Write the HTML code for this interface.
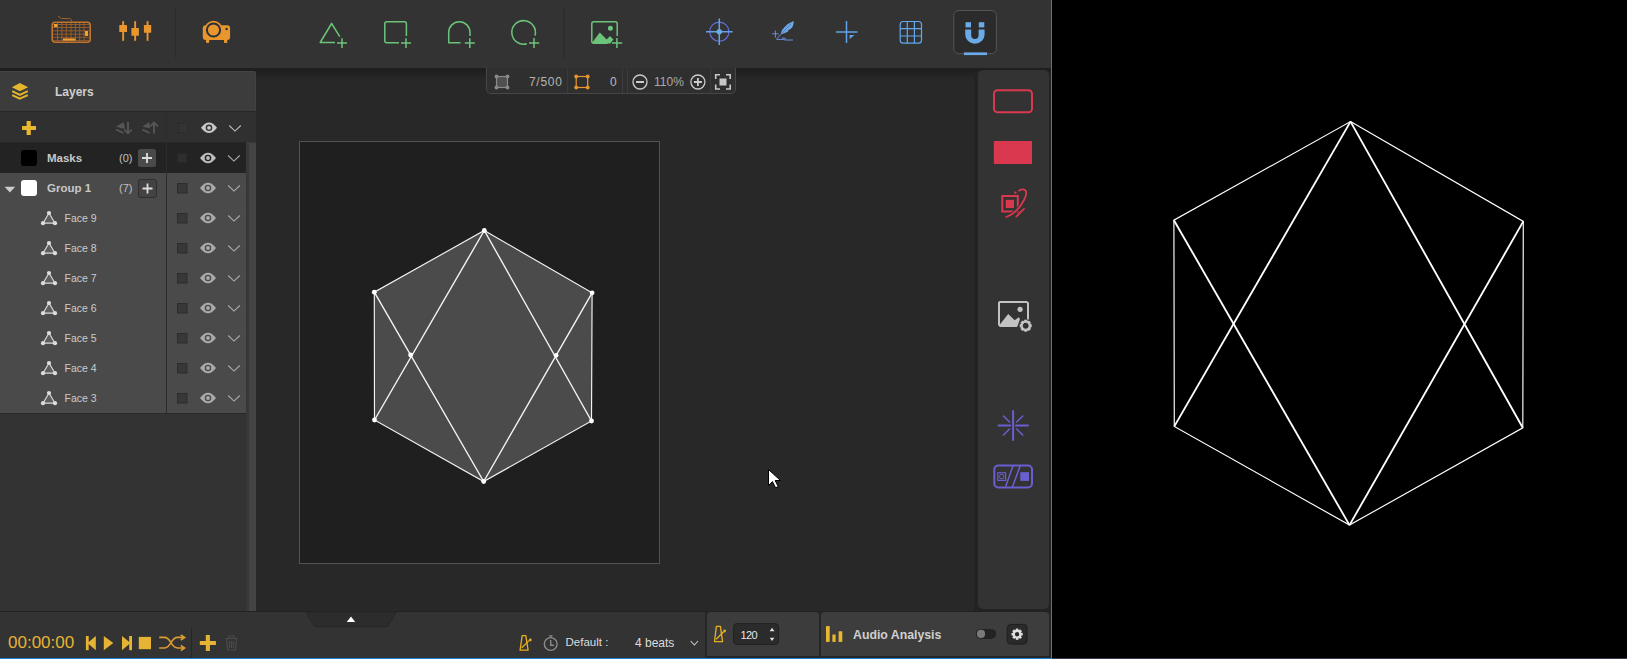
<!DOCTYPE html>
<html><head><meta charset="utf-8">
<style>
html,body{margin:0;padding:0;width:1627px;height:659px;overflow:hidden;background:#000;}
body{position:relative;font-family:"Liberation Sans",sans-serif;}
.a{position:absolute;box-sizing:border-box;}
.t{position:absolute;white-space:nowrap;line-height:1;}
svg{position:absolute;overflow:visible;}
</style></head><body>
<!-- app background -->
<div class="a" style="left:0;top:0;width:1051px;height:658px;background:#282828;"></div>
<!-- toolbar -->
<div class="a" style="left:0;top:0;width:1051px;height:68px;background:#333333;"></div>
<div class="a" style="left:0;top:68px;width:1051px;height:3px;background:#1f1f1f;"></div>
<!-- canvas area top shadow -->
<div class="a" style="left:256px;top:71px;width:718px;height:9px;background:linear-gradient(#202020,#282828);"></div>
<!-- layers panel -->
<div class="a" style="left:0;top:71px;width:256px;height:540px;background:#333333;"></div>
<div class="a" style="left:0;top:71px;width:256px;height:40px;background:#3c3c3c;border-top-right-radius:4px;border-top:1px solid #444;border-right:1px solid #424242;"></div>
<div class="a" style="left:0;top:111px;width:256px;height:1px;background:#262626;"></div>
<div class="a" style="left:0;top:112px;width:256px;height:30px;background:#303030;"></div>
<div class="a" style="left:0;top:142px;width:256px;height:1px;background:#282828;"></div>
<div class="a" style="left:0;top:143px;width:246px;height:30px;background:#232323;"></div>
<div class="a" style="left:0;top:173px;width:246px;height:240px;background:#4a4a4a;"></div>
<div class="a" style="left:0;top:413px;width:246px;height:1px;background:#2a2a2a;"></div>
<div class="a" style="left:166px;top:112px;width:1px;height:301px;background:#2c2c2c;"></div>
<!-- scrollbar -->
<div class="a" style="left:246px;top:142px;width:10px;height:469px;background:#383838;"></div>
<div class="a" style="left:249px;top:143px;width:7px;height:468px;background:#444444;"></div>
<div class="a" style="left:0;top:611px;width:1051px;height:1px;background:#222222;"></div>
<!-- layers content -->
<svg style="left:0;top:0" width="256" height="420" viewBox="0 0 256 420">
<path d="M11.8 87.2L19.8 82.9L28.2 87.2L19.8 91.2Z" fill="#e6b52e"/>
<path d="M12.2 91.2L19.8 94.8L27.8 91.2M12.2 95.2L19.8 98.6L27.8 95.2" fill="none" stroke="#e6b52e" stroke-width="2"/>
<path d="M22 128H36M28.7 121V135" stroke="#e8b830" stroke-width="4.2"/>
<g fill="#555" stroke="none"><path d="M116 126.4L123.7 122.2L125 128.6L122 128.6Z"/><path d="M142.2 126.4L149.5 122.2L149.8 128.6Z"/></g>
<g fill="none" stroke="#555" stroke-width="1.9"><path d="M116.2 129.7L123.5 133M128 122V133M124.4 129.6L128 133.2L131.7 129.6"/><path d="M142.4 129.6L149.5 133M154 122.5V133.5M150.2 126.4L154 122.6L157.9 126.4"/></g>
<rect x="178.5" y="123.5" width="9" height="9" fill="#343434" stroke="#2b2b2b" stroke-width="1"/>
<path d="M201 127.8Q209 117.2 217 127.8Q209 138.4 201 127.8Z" fill="#c8c8c8"/><circle cx="209" cy="127.8" r="3.3" fill="#303030"/><circle cx="209" cy="127.8" r="1.9" fill="#c8c8c8"/>
<path d="M229.2 125.5L235.0 131.1L240.79999999999998 125.5" fill="none" stroke="#bbbbbb" stroke-width="1.1"/>
<rect x="21" y="150" width="16" height="16" rx="3" fill="#000"/>
<rect x="138" y="149" width="18" height="18" rx="2.5" fill="#4a4a4a"/>
<path d="M142 158H152M147 153V163" stroke="#dddddd" stroke-width="1.8"/>
<rect x="177.6" y="153.4" width="9" height="9" fill="#2e2e2e"/>
<path d="M200 158Q208 147.4 216 158Q208 168.6 200 158Z" fill="#bdbdbd"/><circle cx="208" cy="158" r="3.3" fill="#232323"/><circle cx="208" cy="158" r="1.9" fill="#bdbdbd"/>
<path d="M228.1 155.5L233.9 161.1L239.7 155.5" fill="none" stroke="#aaaaaa" stroke-width="1.1"/>
<path d="M4.6 186.7H15.2L9.9 192.4Z" fill="#cccccc"/>
<rect x="21" y="180" width="16" height="16" rx="3" fill="#ffffff"/>
<rect x="138.5" y="179.5" width="18" height="18" rx="2.5" fill="#434343" stroke="#2e2e2e" stroke-width="1"/>
<path d="M142.5 188.5H152.5M147.5 183.5V193.5" stroke="#dddddd" stroke-width="1.8"/>
<rect x="177.5" y="183.5" width="9.5" height="9.5" fill="#383838" stroke="#2c2c2c" stroke-width="1"/>
<path d="M200 188Q208 177.4 216 188Q208 198.6 200 188Z" fill="#aaaaaa"/><circle cx="208" cy="188" r="3.3" fill="#4a4a4a"/><circle cx="208" cy="188" r="1.9" fill="#aaaaaa"/>
<path d="M228.2 185.5L234.0 191.1L239.79999999999998 185.5" fill="none" stroke="#aaaaaa" stroke-width="1.1"/>
<rect x="177.5" y="213.5" width="9.5" height="9.5" fill="#383838" stroke="#2c2c2c" stroke-width="1"/>
<path d="M200 218Q208 207.4 216 218Q208 228.6 200 218Z" fill="#aaaaaa"/><circle cx="208" cy="218" r="3.3" fill="#4a4a4a"/><circle cx="208" cy="218" r="1.9" fill="#aaaaaa"/>
<path d="M228.2 215.5L234.0 221.1L239.79999999999998 215.5" fill="none" stroke="#aaaaaa" stroke-width="1.1"/>
<path d="M43 223.2L49 213L55 223.2Z" fill="#5e5e5e" stroke="#d8d8d8" stroke-width="1.2" stroke-linejoin="round"/>
<g fill="#dcdcdc"><circle cx="49" cy="213" r="2.1"/><circle cx="43" cy="223.2" r="2.1"/><circle cx="55" cy="223.2" r="2.1"/></g>
<rect x="177.5" y="243.5" width="9.5" height="9.5" fill="#383838" stroke="#2c2c2c" stroke-width="1"/>
<path d="M200 248Q208 237.4 216 248Q208 258.6 200 248Z" fill="#aaaaaa"/><circle cx="208" cy="248" r="3.3" fill="#4a4a4a"/><circle cx="208" cy="248" r="1.9" fill="#aaaaaa"/>
<path d="M228.2 245.5L234.0 251.1L239.79999999999998 245.5" fill="none" stroke="#aaaaaa" stroke-width="1.1"/>
<path d="M43 253.2L49 243L55 253.2Z" fill="#5e5e5e" stroke="#d8d8d8" stroke-width="1.2" stroke-linejoin="round"/>
<g fill="#dcdcdc"><circle cx="49" cy="243" r="2.1"/><circle cx="43" cy="253.2" r="2.1"/><circle cx="55" cy="253.2" r="2.1"/></g>
<rect x="177.5" y="273.5" width="9.5" height="9.5" fill="#383838" stroke="#2c2c2c" stroke-width="1"/>
<path d="M200 278Q208 267.4 216 278Q208 288.6 200 278Z" fill="#aaaaaa"/><circle cx="208" cy="278" r="3.3" fill="#4a4a4a"/><circle cx="208" cy="278" r="1.9" fill="#aaaaaa"/>
<path d="M228.2 275.5L234.0 281.1L239.79999999999998 275.5" fill="none" stroke="#aaaaaa" stroke-width="1.1"/>
<path d="M43 283.2L49 273L55 283.2Z" fill="#5e5e5e" stroke="#d8d8d8" stroke-width="1.2" stroke-linejoin="round"/>
<g fill="#dcdcdc"><circle cx="49" cy="273" r="2.1"/><circle cx="43" cy="283.2" r="2.1"/><circle cx="55" cy="283.2" r="2.1"/></g>
<rect x="177.5" y="303.5" width="9.5" height="9.5" fill="#383838" stroke="#2c2c2c" stroke-width="1"/>
<path d="M200 308Q208 297.4 216 308Q208 318.6 200 308Z" fill="#aaaaaa"/><circle cx="208" cy="308" r="3.3" fill="#4a4a4a"/><circle cx="208" cy="308" r="1.9" fill="#aaaaaa"/>
<path d="M228.2 305.5L234.0 311.1L239.79999999999998 305.5" fill="none" stroke="#aaaaaa" stroke-width="1.1"/>
<path d="M43 313.2L49 303L55 313.2Z" fill="#5e5e5e" stroke="#d8d8d8" stroke-width="1.2" stroke-linejoin="round"/>
<g fill="#dcdcdc"><circle cx="49" cy="303" r="2.1"/><circle cx="43" cy="313.2" r="2.1"/><circle cx="55" cy="313.2" r="2.1"/></g>
<rect x="177.5" y="333.5" width="9.5" height="9.5" fill="#383838" stroke="#2c2c2c" stroke-width="1"/>
<path d="M200 338Q208 327.4 216 338Q208 348.6 200 338Z" fill="#aaaaaa"/><circle cx="208" cy="338" r="3.3" fill="#4a4a4a"/><circle cx="208" cy="338" r="1.9" fill="#aaaaaa"/>
<path d="M228.2 335.5L234.0 341.1L239.79999999999998 335.5" fill="none" stroke="#aaaaaa" stroke-width="1.1"/>
<path d="M43 343.2L49 333L55 343.2Z" fill="#5e5e5e" stroke="#d8d8d8" stroke-width="1.2" stroke-linejoin="round"/>
<g fill="#dcdcdc"><circle cx="49" cy="333" r="2.1"/><circle cx="43" cy="343.2" r="2.1"/><circle cx="55" cy="343.2" r="2.1"/></g>
<rect x="177.5" y="363.5" width="9.5" height="9.5" fill="#383838" stroke="#2c2c2c" stroke-width="1"/>
<path d="M200 368Q208 357.4 216 368Q208 378.6 200 368Z" fill="#aaaaaa"/><circle cx="208" cy="368" r="3.3" fill="#4a4a4a"/><circle cx="208" cy="368" r="1.9" fill="#aaaaaa"/>
<path d="M228.2 365.5L234.0 371.1L239.79999999999998 365.5" fill="none" stroke="#aaaaaa" stroke-width="1.1"/>
<path d="M43 373.2L49 363L55 373.2Z" fill="#5e5e5e" stroke="#d8d8d8" stroke-width="1.2" stroke-linejoin="round"/>
<g fill="#dcdcdc"><circle cx="49" cy="363" r="2.1"/><circle cx="43" cy="373.2" r="2.1"/><circle cx="55" cy="373.2" r="2.1"/></g>
<rect x="177.5" y="393.5" width="9.5" height="9.5" fill="#383838" stroke="#2c2c2c" stroke-width="1"/>
<path d="M200 398Q208 387.4 216 398Q208 408.6 200 398Z" fill="#aaaaaa"/><circle cx="208" cy="398" r="3.3" fill="#4a4a4a"/><circle cx="208" cy="398" r="1.9" fill="#aaaaaa"/>
<path d="M228.2 395.5L234.0 401.1L239.79999999999998 395.5" fill="none" stroke="#aaaaaa" stroke-width="1.1"/>
<path d="M43 403.2L49 393L55 403.2Z" fill="#5e5e5e" stroke="#d8d8d8" stroke-width="1.2" stroke-linejoin="round"/>
<g fill="#dcdcdc"><circle cx="49" cy="393" r="2.1"/><circle cx="43" cy="403.2" r="2.1"/><circle cx="55" cy="403.2" r="2.1"/></g>
</svg>
<div class="t" style="left:55px;top:86px;font-size:12px;font-weight:bold;color:#cfcfcf;">Layers</div>
<div class="t" style="left:47px;top:153px;font-size:11.5px;font-weight:bold;color:#c8c8c8;">Masks</div>
<div class="t" style="left:119px;top:152.5px;font-size:11px;color:#c0c0c0;">(0)</div>
<div class="t" style="left:47px;top:183px;font-size:11.5px;font-weight:bold;color:#c8c8c8;">Group 1</div>
<div class="t" style="left:119px;top:182.5px;font-size:11px;color:#c0c0c0;">(7)</div>
<div class="t" style="left:64.5px;top:212.5px;font-size:10.5px;color:#cccccc;">Face 9</div>
<div class="t" style="left:64.5px;top:242.5px;font-size:10.5px;color:#cccccc;">Face 8</div>
<div class="t" style="left:64.5px;top:272.5px;font-size:10.5px;color:#cccccc;">Face 7</div>
<div class="t" style="left:64.5px;top:302.5px;font-size:10.5px;color:#cccccc;">Face 6</div>
<div class="t" style="left:64.5px;top:332.5px;font-size:10.5px;color:#cccccc;">Face 5</div>
<div class="t" style="left:64.5px;top:362.5px;font-size:10.5px;color:#cccccc;">Face 4</div>
<div class="t" style="left:64.5px;top:392.5px;font-size:10.5px;color:#cccccc;">Face 3</div>
<!-- artboard -->
<div class="a" style="left:299px;top:141px;width:361px;height:423px;background:#1f1f1f;border:1px solid #525252;"></div>
<!-- canvas hexagon -->
<svg style="left:0;top:0" width="1627" height="659" viewBox="0 0 1627 659">
<polygon points="484.3,230.5 592.1,292.8 591.5,421 483.7,481.5 374.5,420 374.3,292.2" fill="#4b4b4b"/>
<g stroke="#f4f4f4" stroke-width="1.4" fill="none" stroke-linecap="round">
<polygon stroke-width="1.15" points="484.3,230.5 592.1,292.8 591.5,421 483.7,481.5 374.5,420 374.3,292.2"/>
<line x1="484.3" y1="230.5" x2="374.5" y2="420"/>
<line x1="484.3" y1="230.5" x2="591.5" y2="421"/>
<line x1="483.7" y1="481.5" x2="374.3" y2="292.2"/>
<line x1="483.7" y1="481.5" x2="592.1" y2="292.8"/>
</g>
<g fill="#ffffff">
<circle cx="484.3" cy="230.5" r="2.4"/><circle cx="592.1" cy="292.8" r="2.4"/><circle cx="591.5" cy="421" r="2.4"/>
<circle cx="483.7" cy="481.5" r="2.4"/><circle cx="374.5" cy="420" r="2.4"/><circle cx="374.3" cy="292.2" r="2.4"/>
<circle cx="410.6" cy="355" r="2.4"/><circle cx="556.1" cy="355.3" r="2.4"/>
</g>
<!-- preview hexagon -->
<g stroke="#ffffff" fill="none">
<polygon stroke-width="1.15" points="1350.5,121.6 1523.3,221.4 1522.8,427.8 1349.5,525.1 1174.3,426.4 1173.9,220.2"/>
<g stroke-width="1.85">
<line x1="1350.5" y1="121.6" x2="1174.3" y2="426.4"/>
<line x1="1350.5" y1="121.6" x2="1522.8" y2="427.8"/>
<line x1="1349.5" y1="525.1" x2="1173.9" y2="220.2"/>
<line x1="1349.5" y1="525.1" x2="1523.3" y2="221.4"/>
</g></g>
</svg>
<!-- right tool panel -->
<div class="a" style="left:974px;top:71px;width:77px;height:540px;background:#232323;"></div>
<div class="a" style="left:978px;top:70px;width:71px;height:539px;background:#333333;border-radius:5px;"></div>
<!-- bottom bar -->
<div class="a" style="left:0;top:612px;width:1051px;height:46px;background:#333333;"></div>
<div class="a" style="left:705px;top:612px;width:346px;height:46px;background:#262626;"></div>
<div class="a" style="left:707px;top:612px;width:112px;height:44px;background:#3c3c3c;border-radius:4px 4px 1px 1px;"></div>
<div class="a" style="left:821px;top:612px;width:228px;height:44px;background:#3d3d3d;border-radius:4px 4px 1px 1px;"></div>
<!-- toolbar icons -->
<svg style="left:0;top:0" width="1051" height="68" viewBox="0 0 1051 68">
<!-- keyboard -->
<g fill="none">
<rect x="52.2" y="22.2" width="38" height="20" rx="3" stroke="#c07530" stroke-width="1.6"/>
<g stroke="#a0602a" stroke-width="0.9">
<path d="M53 24.5H89.5M53 27.5H89.5M53 30.8H89.5M53 34.2H89.5M53 37.3H89.5M53 40.4H89.5"/>
<path d="M57.5 23V42M61.9 23V42M66.3 23V42M71 23V42M75.4 23V42M79.7 23V42M84.1 23V42"/>
</g>
<path d="M58 16.2L61.4 18.5H69.7Q71.5 19 71.6 21.6" stroke="#a0602a" stroke-width="1"/>
</g>
<g fill="#f0a030"><rect x="54" y="24" width="3.4" height="3" /><rect x="63" y="38.4" width="12.5" height="2.2"/><rect x="85" y="31" width="3" height="5"/></g>
<!-- sliders -->
<g fill="#e8962e">
<rect x="122.2" y="21.2" width="1.9" height="19.6"/><rect x="134.2" y="21.2" width="1.9" height="19.6"/><rect x="146.6" y="21.2" width="1.9" height="19.6"/>
<rect x="119.3" y="24.9" width="7.7" height="7" rx="0.5"/><rect x="131.4" y="28" width="7.5" height="7.8" rx="0.5"/><rect x="143.9" y="24.9" width="7.3" height="7.9" rx="0.5"/>
</g>
<rect x="175" y="7" width="1" height="51" fill="#2b2b2b"/>
<!-- projector -->
<g fill="#e8962e">
<rect x="202.8" y="25.3" width="27.3" height="14.8" rx="3"/>
<rect x="206" y="38" width="3.2" height="5.1" rx="1"/><rect x="224" y="38" width="3.3" height="5.1" rx="1"/>
<circle cx="213.5" cy="30" r="9.2"/>
</g>
<circle cx="213.5" cy="30" r="6.6" fill="#e8962e" stroke="#2e3038" stroke-width="2"/>
<circle cx="226.6" cy="29" r="1.2" fill="#2e3038"/>
<!-- green shape icons -->
<g fill="none" stroke="#6cc47a" stroke-width="1.5" stroke-linejoin="round">
<path d="M335 42.5H320.2L331.6 23.5L339.8 36.6"/>
<path d="M337 42.9H347M342 38.2V48"/>
<path d="M406.4 36V23.7A2 2 0 0 0 404.4 21.7H386.8A2 2 0 0 0 384.8 23.7V40.8A2 2 0 0 0 386.8 42.8H399"/>
<path d="M401 43H411M406 38.2V48"/>
<path d="M460.5 42.8H448.7V32.5A10.65 10.8 0 0 1 470 32.5V36"/>
<path d="M464.8 43H474.8M469.8 38.2V48"/>
<path d="M535 35.6A11.8 11.8 0 1 0 526.8 43.8"/>
<path d="M529 43H539.2M534 38V48"/>
<path d="M617.2 36V23.8A2 2 0 0 0 615.2 21.8H593.8A2 2 0 0 0 591.8 23.8V41.2A2 2 0 0 0 593.8 43.2H607.5"/>
<path d="M611.9 43H622.2M616.9 38V48"/>
</g>
<g fill="#6cc47a">
<path d="M592.6 42L599.8 32.5L606.7 39.5L610 36L613.4 39.5L610.3 43.5H593.5Z"/>
<circle cx="610.4" cy="28.3" r="2.5"/>
</g>
<rect x="563.5" y="7" width="1" height="51" fill="#2b2b2b"/>
<!-- crosshair -->
<circle cx="719.3" cy="31.7" r="9.6" fill="none" stroke="#6470d8" stroke-width="1.1"/>
<g stroke="#62a2e8" stroke-width="1.5"><path d="M706 31.7H732.6M719.3 18.4V45"/></g>
<circle cx="719.3" cy="31.7" r="2.7" fill="#6aaae6"/>
<!-- feather -->
<path d="M793.8 20.9C789.5 22.3 785 25.5 782.3 29.8C781.5 31.2 781 32.6 780.8 34.2C783.5 33.8 786.2 32.8 788.6 31.1L787.8 30.4C790.5 29.6 792.2 27.8 793 25.8C793.5 24.3 793.8 22.5 793.8 20.9Z" fill="#6aaae6"/>
<path d="M791 23.8L782 33.2" stroke="#5a5ac8" stroke-width="0.7" fill="none"/>
<g fill="none" stroke="#6a8ee0" stroke-width="1">
<path d="M781.5 33.6L776.5 39.2"/>
<path d="M772.2 33.8H778.6M775.4 30.5V37.6"/>
<path d="M776.5 39.4H784.8C786.2 39.4 786 38.1 784.2 38.1H781.8M784.5 40H793"/>
</g>
<!-- crosshair w/ triangle -->
<g stroke="#62a2e8" stroke-width="1.5"><path d="M835.9 32H857.5M846.5 21V43"/></g>
<path d="M849.6 35H854.4L849.6 39.3Z" fill="#62a2e8"/>
<!-- grid -->
<g fill="none" stroke="#62a8ec" stroke-width="1.2">
<rect x="900.2" y="21.5" width="21.3" height="21.7" rx="3"/>
<path d="M907.3 21.5V43.2M914.4 21.5V43.2M900.2 28.7H921.5M900.2 36H921.5"/>
</g>
<!-- magnet button -->
<rect x="953.8" y="10.5" width="42.6" height="43.2" rx="5" fill="#2b2b2b" stroke="#555" stroke-width="1"/>
<rect x="963.9" y="52.4" width="23.1" height="2.7" fill="#6aaae6"/>
<g fill="#6aaae6">
<rect x="965.5" y="22.2" width="5.5" height="5.2"/><rect x="978.8" y="22.2" width="5.5" height="5.2"/>
<path d="M965.2 29.6H971.2V35.2A3.7 3.7 0 0 0 978.6 35.2V29.6H984.6V34.5A9.7 9.2 0 0 1 965.2 34.5Z"/>
</g>
</svg>
<div class="a" style="left:486px;top:68px;width:250px;height:26px;background:#2f2f2f;border:1px solid #464646;border-top:none;border-radius:0 0 5px 5px;"></div>
<svg style="left:0;top:0" width="1051" height="659" viewBox="0 0 1051 659">
<g fill="#3e3e3e"><rect x="567.2" y="69" width="1" height="24"/><rect x="622" y="69" width="1" height="24"/><rect x="627" y="69" width="1" height="24"/><rect x="710.2" y="69" width="1" height="24"/></g>
<rect x="496.5" y="76.5" width="11" height="11" fill="#505050" stroke="#8a8a8a" stroke-width="1.2"/>
<g fill="#8a8a8a"><circle cx="496.5" cy="76.5" r="1.9"/><circle cx="507.5" cy="76.5" r="1.9"/><circle cx="496.5" cy="87.5" r="1.9"/><circle cx="507.5" cy="87.5" r="1.9"/></g>
<rect x="576.2" y="76.5" width="11.5" height="11" fill="none" stroke="#e8962e" stroke-width="1.2"/>
<g fill="#e8962e"><circle cx="576.2" cy="76.5" r="1.9"/><circle cx="587.7" cy="76.5" r="1.9"/><circle cx="576.2" cy="87.5" r="1.9"/><circle cx="587.7" cy="87.5" r="1.9"/></g>
<g fill="none" stroke="#cccccc" stroke-width="1.3"><circle cx="640" cy="82" r="7"/><circle cx="697.9" cy="82" r="7"/></g>
<g stroke="#cccccc" stroke-width="1.8"><path d="M636 82H644M693.9 82H701.9M697.9 78V86"/></g>
<g fill="none" stroke="#c8c8c8" stroke-width="1.6"><path d="M715.7 79V74.7H720M726 74.7H730.2V79M730.2 84.5V89H726M720 89H715.7V84.5"/></g>
<rect x="719.5" y="78.5" width="7" height="7" fill="#c8c8c8"/>
<rect x="994" y="90.3" width="38" height="22" rx="3.5" fill="none" stroke="#d9384e" stroke-width="2"/>
<rect x="993.8" y="141" width="38.2" height="23" rx="1" fill="#d9384e"/>
<rect x="1002.3" y="196" width="15.5" height="15.5" fill="none" stroke="#d9384e" stroke-width="2"/>
<rect x="1005.8" y="199.8" width="8.2" height="8.2" fill="#d9384e"/>
<path d="M1009 215.6C1014 213.5 1019.5 208.5 1023.6 200.5" fill="none" stroke="#333333" stroke-width="3.6"/><g fill="none" stroke="#d9384e" stroke-width="1.8" stroke-linecap="round"><path d="M1006.3 217C1014 214 1020 208 1024 200C1027 194 1027 190.5 1024 189.6C1022.5 189.2 1020.5 189.8 1019 190.6"/><path d="M1016.3 216.6L1024 208.8"/></g>
<circle cx="1015.3" cy="192.6" r="1.2" fill="#d9384e"/>
<path d="M1028 325V303A2 2 0 0 0 1026 302H1000A2 2 0 0 0 999 303V324.5A2 2 0 0 0 1001 326H1017" fill="none" stroke="#c2c2c2" stroke-width="2"/>
<path d="M999.5 325L1008.2 313.9L1014.7 320.2L1018.8 317.2L1020 319L1017.5 326.3H1000Z" fill="#c2c2c2"/>
<circle cx="1020.1" cy="309.3" r="2.6" fill="#c2c2c2"/>
<circle cx="1025.7" cy="325.7" r="6.8" fill="#333"/>
<g transform="translate(1025.7 325.7)"><g fill="#c2c2c2"><rect x="-1.5" y="-6" width="3" height="3" transform="rotate(0)"/><rect x="-1.5" y="-6" width="3" height="3" transform="rotate(45)"/><rect x="-1.5" y="-6" width="3" height="3" transform="rotate(90)"/><rect x="-1.5" y="-6" width="3" height="3" transform="rotate(135)"/><rect x="-1.5" y="-6" width="3" height="3" transform="rotate(180)"/><rect x="-1.5" y="-6" width="3" height="3" transform="rotate(225)"/><rect x="-1.5" y="-6" width="3" height="3" transform="rotate(270)"/><rect x="-1.5" y="-6" width="3" height="3" transform="rotate(315)"/></g><circle r="4.3" fill="none" stroke="#c2c2c2" stroke-width="2.2"/></g>
<g stroke="#6a5fd0" stroke-width="2" stroke-linecap="round"><path d="M1013.1 411V440M998.5 425.5H1010.2M1016 425.5H1028"/></g>
<g stroke="#6a5fd0" stroke-width="1.5" stroke-linecap="round"><path d="M1003.5 416L1009.5 422M1022.7 416L1016.7 422M1003.5 435L1009.5 429M1022.7 435L1016.7 429"/></g>
<rect x="994.3" y="465.5" width="37.7" height="22" rx="4" fill="none" stroke="#6a5fd0" stroke-width="2"/>
<rect x="997.8" y="472.8" width="7.8" height="7.6" fill="none" stroke="#6a5fd0" stroke-width="1.2"/><circle cx="1001.7" cy="476.6" r="2.3" fill="none" stroke="#6a5fd0" stroke-width="1"/>
<g stroke="#6a5fd0" stroke-width="1.5"><path d="M1005.5 487L1013.1 465.5M1012.4 487L1020.3 465.5"/></g>
<rect x="1020.3" y="472.2" width="8.7" height="8.7" fill="#6a5fd0"/>
<path d="M768.5 469.5V485.5L772.4 481.6L775.6 487.8L778.2 486.6L775.2 480.5H780.5Z" fill="#ffffff" stroke="#000" stroke-width="1" stroke-linejoin="miter"/>
<path d="M306 612H396.4L387.4 626.7H314.5Z" fill="#2c2c2c" stroke="#262626" stroke-width="1"/>
<path d="M346.7 622H355.2L351 616.6Z" fill="#ffffff"/>
<g fill="#e6b434"><rect x="85.9" y="636" width="2.8" height="14.2"/><path d="M95.8 636V650.2L87.5 643.1Z"/><path d="M103.8 636V650.2L113.3 643.1Z"/><path d="M122 636V650.2L130.5 643.1Z"/><rect x="129.2" y="636" width="2.8" height="14.2"/><rect x="138.8" y="636.9" width="12.2" height="12.3"/></g>
<g fill="none" stroke="#dd9c30" stroke-width="1.6"><path d="M159.2 637.4H164.5C168 637.4 169.5 640 171 642.7C172.5 645.4 174 648 177.5 648H184.5M159.2 648H164.5C168 648 169.5 645.4 171 642.7C172.5 640 174 637.4 177.5 637.4H184.5M180.8 634.9L184.6 637.4L180.8 640M180.8 645.4L184.6 648L180.8 650.6"/></g>
<rect x="191" y="628.3" width="1" height="29.7" fill="#262626"/>
<path d="M199.8 643H215.9M207.85 634.9V651.1" stroke="#e6b434" stroke-width="4.1"/>
<g fill="none" stroke="#4a4a4a" stroke-width="1.2"><path d="M225.5 638.5H237.5M229 638.3V636H234V638.3M226.5 638.5L227.5 650H235.5L236.5 638.5M229.5 641V648M231.5 641V648M233.5 641V648"/></g>
</svg>
<div class="t" style="left:529px;top:75.5px;font-size:12px;letter-spacing:0.7px;color:#b4b4b4;">7/500</div>
<div class="t" style="left:610px;top:75.5px;font-size:12px;color:#bbbbbb;">0</div>
<div class="t" style="left:654px;top:75.5px;font-size:12px;color:#aaaaaa;">110%</div>
<div class="t" style="left:8px;top:634px;font-size:17px;color:#e6b434;">00:00:00</div>
<svg style="left:0;top:0" width="1051" height="659" viewBox="0 0 1051 659">
<g fill="none" stroke="#e8b020" stroke-width="1.3" stroke-linejoin="round"><path d="M522.2 635.6H525.8L528.1 650.2H520.1Z"/><path d="M521.8 647.8L529 640.6"/></g><circle cx="530.3" cy="640" r="1.4" fill="#e8b020"/>
<g fill="none" stroke="#8a8a8a" stroke-width="1.4"><circle cx="550.7" cy="644" r="6.4"/><path d="M550.7 640V645.2H554"/></g><path d="M548.5 635.3H553L550.7 637.6Z" fill="#8a8a8a"/>
<path d="M690.7 641L694.35 645L698 641" fill="none" stroke="#cccccc" stroke-width="1.1"/>
<g fill="none" stroke="#e8b020" stroke-width="1.3" stroke-linejoin="round"><path d="M716.4 626.3H720.4L722.6 641.6H714.5Z"/><path d="M716.2 639.2L723.6 631.8"/></g><circle cx="724.6" cy="631" r="1.4" fill="#e8b020"/>
<rect x="733.6" y="623.5" width="45" height="21" rx="3.5" fill="#2b2b2b" stroke="#222222" stroke-width="1"/>
<g fill="#e0e0e0"><path d="M769.7 631.2H774.4L772.05 627.8Z"/><path d="M769.7 637.7H774.4L772.05 641.1Z"/></g>
<g fill="#e8b830"><rect x="826" y="626.1" width="3.7" height="15.8"/><rect x="832.4" y="634.5" width="3.2" height="7.4"/><rect x="838.6" y="631.3" width="3.7" height="10.6"/></g>
<rect x="975.8" y="628.9" width="20.3" height="10" rx="5" fill="#232323"/><circle cx="981" cy="633.9" r="4.1" fill="#7a7a7a"/>
<rect x="1007.2" y="624.4" width="19.8" height="19.7" rx="3.5" fill="#2a2a2a" stroke="#1e1e1e" stroke-width="1"/>
<g transform="translate(1017.1 634.2)"><g fill="#e0e0e0"><rect x="-1.3" y="-5.6" width="2.6" height="2.8" transform="rotate(0)"/><rect x="-1.3" y="-5.6" width="2.6" height="2.8" transform="rotate(45)"/><rect x="-1.3" y="-5.6" width="2.6" height="2.8" transform="rotate(90)"/><rect x="-1.3" y="-5.6" width="2.6" height="2.8" transform="rotate(135)"/><rect x="-1.3" y="-5.6" width="2.6" height="2.8" transform="rotate(180)"/><rect x="-1.3" y="-5.6" width="2.6" height="2.8" transform="rotate(225)"/><rect x="-1.3" y="-5.6" width="2.6" height="2.8" transform="rotate(270)"/><rect x="-1.3" y="-5.6" width="2.6" height="2.8" transform="rotate(315)"/></g><circle r="3.3" fill="none" stroke="#e0e0e0" stroke-width="2.2"/></g>
</svg>
<div class="t" style="left:565.5px;top:636.5px;font-size:11.5px;color:#dddddd;">Default :</div>
<div class="t" style="left:635px;top:636.5px;font-size:12px;color:#dddddd;">4 beats</div>
<div class="t" style="left:740.5px;top:630px;font-size:11px;letter-spacing:-0.6px;color:#e8e8e8;">120</div>
<div class="t" style="left:853px;top:628.5px;font-size:12.3px;font-weight:bold;color:#cfcfcf;">Audio Analysis</div>
<!-- window border -->
<div class="a" style="left:1051px;top:0;width:1px;height:659px;background:#1a84d8;"></div>
<div class="a" style="left:0;top:658px;width:1052px;height:1px;background:#1a84d8;"></div>
<div class="a" style="left:1052px;top:658px;width:575px;height:1px;background:#3c3a50;"></div>
</body></html>
